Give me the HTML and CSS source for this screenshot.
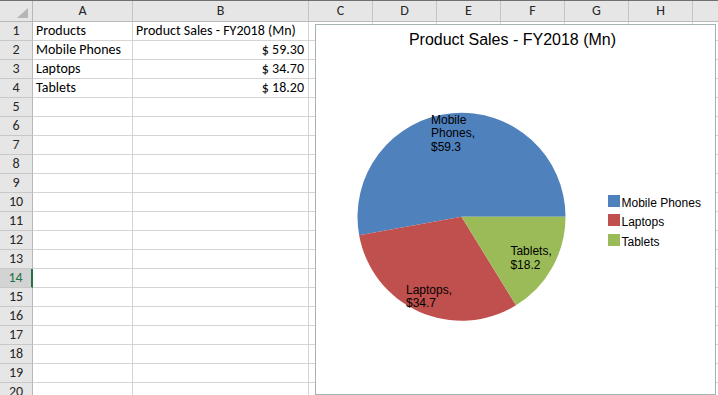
FILE: index.html
```html
<!DOCTYPE html>
<html lang="en">
<head>
<meta charset="utf-8">
<title>Product Sales - FY2018</title>
<link rel="stylesheet" href="styles.css">
</head>
<body>
<div class="sheet">
  <div class="row hdr">
    <div class="corner"><span class="tri"></span></div>
    <div>A</div><div>B</div><div>C</div><div>D</div><div>E</div><div>F</div><div>G</div><div>H</div><div></div>
  </div>
  <div class="row"><div class="rh">1</div><div>Products</div><div>Product Sales - FY2018 (Mn)</div><div></div><div></div><div></div><div></div><div></div><div></div><div></div></div>
  <div class="row"><div class="rh">2</div><div>Mobile Phones</div><div class="num">$ 59.30</div><div></div><div></div><div></div><div></div><div></div><div></div><div></div></div>
  <div class="row"><div class="rh">3</div><div>Laptops</div><div class="num">$ 34.70</div><div></div><div></div><div></div><div></div><div></div><div></div><div></div></div>
  <div class="row"><div class="rh">4</div><div>Tablets</div><div class="num">$ 18.20</div><div></div><div></div><div></div><div></div><div></div><div></div><div></div></div>
  <div class="row"><div class="rh">5</div><div></div><div></div><div></div><div></div><div></div><div></div><div></div><div></div><div></div></div>
  <div class="row"><div class="rh">6</div><div></div><div></div><div></div><div></div><div></div><div></div><div></div><div></div><div></div></div>
  <div class="row"><div class="rh">7</div><div></div><div></div><div></div><div></div><div></div><div></div><div></div><div></div><div></div></div>
  <div class="row"><div class="rh">8</div><div></div><div></div><div></div><div></div><div></div><div></div><div></div><div></div><div></div></div>
  <div class="row"><div class="rh">9</div><div></div><div></div><div></div><div></div><div></div><div></div><div></div><div></div><div></div></div>
  <div class="row"><div class="rh">10</div><div></div><div></div><div></div><div></div><div></div><div></div><div></div><div></div><div></div></div>
  <div class="row"><div class="rh">11</div><div></div><div></div><div></div><div></div><div></div><div></div><div></div><div></div><div></div></div>
  <div class="row"><div class="rh">12</div><div></div><div></div><div></div><div></div><div></div><div></div><div></div><div></div><div></div></div>
  <div class="row"><div class="rh">13</div><div></div><div></div><div></div><div></div><div></div><div></div><div></div><div></div><div></div></div>
  <div class="row"><div class="rh active">14</div><div></div><div></div><div></div><div></div><div></div><div></div><div></div><div></div><div></div></div>
  <div class="row"><div class="rh">15</div><div></div><div></div><div></div><div></div><div></div><div></div><div></div><div></div><div></div></div>
  <div class="row"><div class="rh">16</div><div></div><div></div><div></div><div></div><div></div><div></div><div></div><div></div><div></div></div>
  <div class="row"><div class="rh">17</div><div></div><div></div><div></div><div></div><div></div><div></div><div></div><div></div><div></div></div>
  <div class="row"><div class="rh">18</div><div></div><div></div><div></div><div></div><div></div><div></div><div></div><div></div><div></div></div>
  <div class="row"><div class="rh">19</div><div></div><div></div><div></div><div></div><div></div><div></div><div></div><div></div><div></div></div>
  <div class="row"><div class="rh">20</div><div></div><div></div><div></div><div></div><div></div><div></div><div></div><div></div><div></div></div>

  <div class="chart">
    <svg class="chart-svg" width="399" height="369" viewBox="0 0 399 369" xmlns="http://www.w3.org/2000/svg">
      <text class="title" x="196.5" y="20" text-anchor="middle">Product Sales - FY2018 (Mn)</text>
      <path class="s-blue" d="M145.5,191.7 L249.5,191.7 A104,104 0 1 0 43.15,210.23 Z"/>
      <path class="s-red" d="M145.5,191.7 L43.15,210.23 A104,104 0 0 0 200,280.28 Z"/>
      <path class="s-green" d="M145.5,191.7 L200,280.28 A104,104 0 0 0 249.5,191.7 Z"/>
      <text class="lbl" x="115" y="99">Mobile</text>
      <text class="lbl" x="115" y="112.3">Phones,</text>
      <text class="lbl" x="115" y="125.6">$59.3</text>
      <text class="lbl" x="194.4" y="230.3">Tablets,</text>
      <text class="lbl" x="194.4" y="243.6">$18.2</text>
      <text class="lbl" x="90" y="268.6">Laptops,</text>
      <text class="lbl" x="90" y="282">$34.7</text>
      <rect class="s-blue" x="292" y="170" width="12" height="12"/>
      <rect class="s-red" x="292" y="189" width="12" height="12"/>
      <rect class="s-green" x="292" y="209" width="12" height="12"/>
      <text class="lbl" x="305.5" y="182">Mobile Phones</text>
      <text class="lbl" x="305.5" y="201">Laptops</text>
      <text class="lbl" x="305.5" y="220.5">Tablets</text>
    </svg>
  </div>
</div>
</body>
</html>
```
FILE: styles.css
```css
* { box-sizing: border-box; }
html, body { margin: 0; padding: 0; }
body {
  width: 718px;
  height: 395px;
  overflow: hidden;
  background: #ffffff;
  font-family: Carlito, Lato, "Open Sans", sans-serif;
  color: #000;
}
.sheet {
  position: relative;
  width: 718px;
  height: 395px;
  overflow: hidden;
}
.row {
  display: grid;
  grid-template-columns: 33px 100px 176px repeat(7, 64px);
  height: 19px;
}
.row > div {
  border-right: 1px solid #d4d4d4;
  border-bottom: 1px solid #d4d4d4;
  font-size: 14px;
  line-height: 18px;
  white-space: nowrap;
  overflow: hidden;
  padding: 0 3px 0 3px;
}
.row > .num {
  text-align: right;
  padding-right: 4px;
}
.row.hdr {
  height: 22px;
  border-top: 1px solid #707070;
  background: #e6e6e6;
}
.row.hdr > div {
  line-height: 20px;
  text-align: center;
  color: #262626;
  border-right-color: #c4c4c4;
  border-bottom-color: #b8b8b8;
  padding: 0;
}
.row.hdr > .corner {
  display: flex;
  justify-content: flex-end;
  align-items: flex-end;
  padding: 0 4px 3px 0;
  border-right-color: #b8b8b8;
}
.tri {
  display: block;
  width: 11px;
  height: 10px;
  background: #b5b5b5;
  clip-path: polygon(100% 0, 100% 100%, 0 100%);
}
.row > .rh {
  background: #e6e6e6;
  text-align: center;
  color: #262626;
  padding: 0;
  border-right-color: #b8b8b8;
  border-bottom-color: #c8c8c8;
}
.row > .rh.active {
  background: #d3d3d3;
  color: #217346;
  border-right: 2px solid #217346;
}
.chart {
  position: absolute;
  left: 315px;
  top: 24px;
  width: 401px;
  height: 371px;
  border: 1px solid #a6b4b4;
  background: #ffffff;
}
.chart-svg {
  display: block;
  font-family: "Liberation Sans", Arial, sans-serif;
}
.title { font-size: 16px; fill: #000; }
.lbl { font-size: 12px; fill: #000; }
.s-blue { fill: #4f81bd; }
.s-red { fill: #c0504d; }
.s-green { fill: #9bbb59; }
```
